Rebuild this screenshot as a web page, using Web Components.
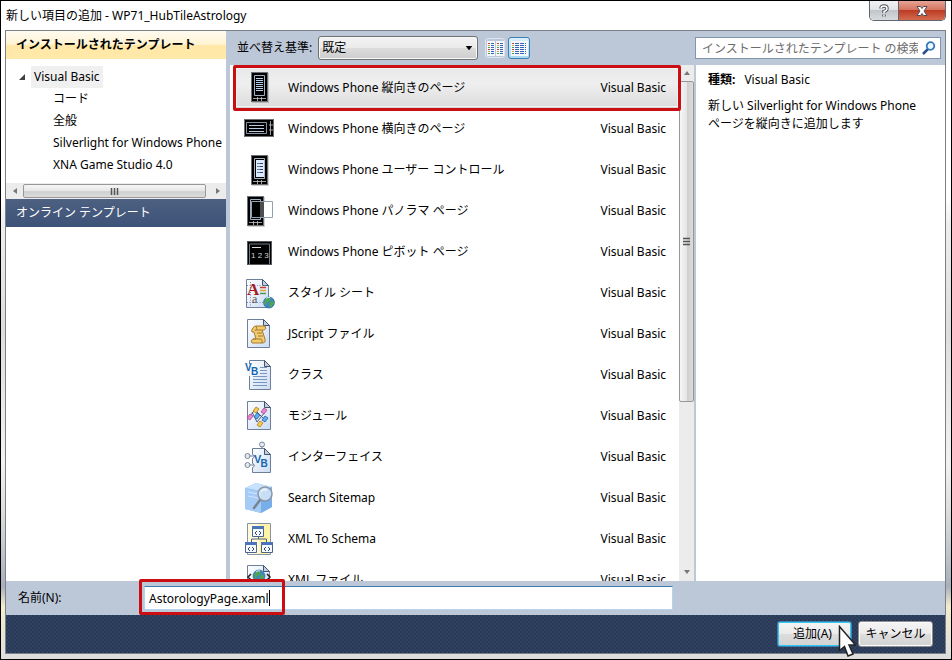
<!DOCTYPE html>
<html lang="ja">
<head>
<meta charset="utf-8">
<title>新しい項目の追加</title>
<style>
html,body{margin:0;height:100%}
body{font:12px/18px "Noto Sans","Noto Sans CJK JP",sans-serif;color:#000;background:#000}
</style>
</head>
<body>
<add-dialog></add-dialog>
<script>
function define(tag, markup, setup) {
  const template = document.createElement('template');
  template.innerHTML = '<style>*{box-sizing:border-box}:host{display:block;box-sizing:border-box}button,input,select{font:inherit;color:inherit;margin:0;padding:0;border:0;outline:0}</style>' + markup;
  customElements.define(tag, class extends HTMLElement {
    connectedCallback() {
      if (this.shadowRoot) return;
      this.attachShadow({ mode: 'open' }).append(template.content.cloneNode(true));
      if (setup) setup(this, this.shadowRoot);
    }
  });
}

/* ---- icon set ---- */
const page = (x, y, w, h) => `<path d="M${x} ${y}h${w - 6}l6 6v${h - 6}h${-w}z" fill="url(#pg)" stroke="#6e7f9c"/><path d="M${x + w - 6} ${y}v6h6z" fill="#c3cede" stroke="#44546e"/>`;
const phone = (x, y) => `<path d="M${x + 1} ${y + 1}h17v30h-17z" fill="#000" opacity=".18"/><path d="M${x} ${y}h17v30h-17z" fill="#6c6f73"/><path d="M${x + 1} ${y + 1}h15v28h-15z" fill="#000"/><path d="M${x + 3.5} ${y + 3.5}h10v20h-10z" fill="#000" stroke="#a3b2c2"/><path d="M${x + 2} ${y + 26.5}h13M${x + 6.5} ${y + 25}v4M${x + 10.5} ${y + 25}v4" stroke="#c8c8c8" stroke-width=".8"/>`;
const globe = (x, y, r) => `<circle cx="${x}" cy="${y}" r="${r}" fill="#3c86c4" stroke="#28609c" stroke-width=".6"/><path d="M${x - 4} ${y - 3}l3-2 3 1-1 3-3 1-1 3-2-2zM${x + 1} ${y}l3-2 1 3-3 4-2-2z" fill="#4fa452"/><path d="M${x - 3} ${y - 4}q2-2 4-1" stroke="#cfe9f8" fill="none"/>`;
const win = (x, y) => `<path d="M${x + .5} ${y + .5}h11v10h-11z" fill="#f4f8ff" stroke="#4a6390"/><path d="M${x} ${y}h12v3h-12z" fill="#4b74ba"/><path d="M${x + 5} ${y + 5}l-2 2 2 2M${x + 7} ${y + 5}l2 2-2 2" stroke="#334669" fill="none"/>`;
const chip = (x, y, c, s) => `<path d="M${x} ${y - 3}l3 2-3 4-3-2z" fill="${c}" stroke="${s}" stroke-width=".8"/>`;
const ICONS = {
  portrait: phone(8, 0) + '<path d="M13 6.500h7M13 8.500h7M13 10.500h7M13 12.500h7M13 14.500h7M13 16.500h7M13 18.500h7" stroke="#b9d3ef"/>',
  landscape: '<path d="M1 6h30v18H1z" fill="#6c6f73"/><path d="M2 7h28v16H2z" fill="#000"/><path d="M3.500 9.500h20v11h-20z" fill="#000" stroke="#8795a4"/><path d="M6 12.500h15M6 15.500h15M6 18.500h15" stroke="#b5cee8"/><path d="M27.500 8v14M26 12h4M26 17h4" stroke="#c8c8c8" stroke-width=".8"/>',
  control: phone(8, 1) + '<path d="M13 6h8v17h-8z" fill="#dceaff"/><path d="M14 9.500h3M14 12.500h3M14 15.500h3M14 18.500h3" stroke="#607ea8"/><path d="M17 9.500h3M17 12.500h3M17 15.500h3M17 18.500h3" stroke="#31445f"/>',
  panorama: phone(4, 1) + '<path d="M21 6h9v17h-9z" fill="#fff"/><path d="M17 7h4v15h-4z" fill="#4b4e52"/><path d="M8.500 6.500h21v16h-21z" fill="none" stroke="#93a0b3"/>',
  pivot: '<path d="M4 5h25v24H4z" fill="#55595e"/><path d="M5 6h23v22H5z" fill="#000"/><path d="M6.500 29V8h20v20" fill="none" stroke="#6f7a86"/><path d="M9 11.500h9" stroke="#ddd"/><text x="8" y="22" font-family="Liberation Sans,sans-serif" font-size="8" fill="#d3d3d3">1 2 3</text>',
  style: page(3.5, 2.5, 22, 28) + '<path d="M4 8.500h20M7.500 5v25M4 25.500h19" stroke="#7f93b5" stroke-dasharray="1 1.500"/><path d="M17 10.500h6" stroke="#cb3b32" stroke-width="1.500"/><path d="M17 13.500h6" stroke="#e5a235" stroke-width="1.500"/><path d="M17 16.500h6" stroke="#4c9850" stroke-width="1.500"/><text x="4" y="18" font-family="Liberation Serif,serif" font-weight="700" font-size="17" fill="#a51c22">A</text><text x="9" y="26" font-family="Liberation Serif,serif" font-size="12" fill="#555">a</text>' + globe(26, 25.5, 5.5),
  script: page(4.5, 1.5, 22, 28) + '<path d="M10 10q1-2 3-2h9q2 3-1 4h-2l3 9q1 4-3 4H9q-2-3 1-4h3l-2-7H9q-1-2 1-4z" fill="#f2cb70" stroke="#a77a2e"/><path d="M13 8q2 3-1 5M13 12h6M14 15h5M15 18h5M10 21h8q2 2 1 4" stroke="#a77a2e" fill="none"/>',
  vbclass: page(6.5, 1.5, 21, 29) + '<path d="M17 8.500h7M17 11.500h7M17 14.500h7M10 17.500h14M10 20.500h14M10 23.500h14M10 26.500h14" stroke="#7895bd"/><path d="M2 5h13v12H2z" fill="#f7fbff" opacity=".9"/><text x="2" y="12" font-family="Liberation Sans,sans-serif" font-weight="700" font-size="10" fill="#1664b0">V</text><text x="8" y="16" font-family="Liberation Sans,sans-serif" font-weight="700" font-size="10" fill="#1664b0">B</text>',
  module: page(4.5, 1.5, 23, 28) + '<path d="M5 18l7-8 10 10M9 12l5 10 8-10" stroke="#4b587c" fill="none"/>' + chip(13, 10, '#f4ca55', '#b37816') + chip(7, 17, '#ef84d4', '#a64b91') + chip(21, 11, '#ef84d4', '#a64b91') + chip(14, 16, '#62adf0', '#225ea3') + chip(22, 19, '#62adf0', '#225ea3') + chip(17, 24, '#f4ca55', '#b37816'),
  iface: '<path d="M19 5v5M6 15h6M6 24h6" stroke="#6c7c93"/><path d="M9.500 7.500h12l6 6v18h-18v-5q4-2 0-4v-5q4-2 0-4z" fill="url(#pg)" stroke="#6e7f9c"/><path d="M21.500 7.500v6h6z" fill="#c3cede" stroke="#44546e"/><g fill="#e5eaf0" stroke="#78889e"><circle cx="19" cy="3.500" r="2.500"/><circle cx="4.500" cy="15" r="2.500"/><circle cx="4.500" cy="24" r="2.500"/></g><text x="11" y="22" font-family="Liberation Sans,sans-serif" font-weight="700" font-size="11" fill="#1664b0">V</text><text x="17.500" y="26" font-family="Liberation Sans,sans-serif" font-weight="700" font-size="10" fill="#1664b0">B</text>',
  search: '<path d="M2 6l11-5 16 4v20l-11 6-16-4z" fill="#8bbbf1"/><path d="M2 6l11-5 16 4-11 4z" fill="#c8e1fd"/><path d="M2 6l16 3v22L2 27z" fill="#a5cbf7"/><path d="M18 9l11-4v20l-11 6z" fill="#78aeea"/><path d="M5 10l10 2M5 14l10 2" stroke="#cfe4ff"/><path d="M17 18l-6 8" stroke="#78838f" stroke-width="2.500" stroke-linecap="round"/><circle cx="22" cy="12" r="7" fill="#dbeafa" fill-opacity=".8" stroke="#8c97a5" stroke-width="1.500"/><path d="M18 10q2-3 6-2" stroke="#fff" fill="none"/>',
  schema: '<path d="M4.500.500h23v31h-23z" fill="#fff3a8" stroke="#8893a5"/><path d="M5 1h11v30H5z" fill="#fffbdc"/><path d="M15.500 12v4m-7 3v-3h15v3" stroke="#50617e" fill="none"/>' + win(9, 3) + win(2, 19) + win(18, 19),
  xml: page(4.5, 1.5, 22, 29) + globe(16, 12, 6) + '<path d="M8 10l-3 3 3 3M24 10l3 3-3 3" stroke="#222" stroke-width="1.500" fill="none"/>'
};

define('template-icon', `<style>:host{flex:none;width:32px;height:32px}svg{display:block}</style>
<svg width="32" height="32" viewBox="0 0 32 32" aria-hidden="true"></svg>`, (host, root) => {
  root.querySelector('svg').innerHTML = '<defs><linearGradient id="pg" x2="1" y2="1"><stop stop-color="#fff"/><stop offset="1" stop-color="#cbdcf3"/></linearGradient></defs>' + ICONS[host.getAttribute('name')];
});

define('title-bar', `<style>
:host{display:flex;height:29px;align-items:center;padding-left:1px}
h1{flex:1;margin:0;font-size:12px;font-weight:400}
.caps{display:flex;align-self:flex-start;height:20px;border:1px solid #61666c;border-top:0;border-radius:0 0 5px 5px;overflow:hidden}
button{display:grid;place-items:center;width:28px;background:linear-gradient(#f1f2f3,#e2e4e6 45%,#c2c6ca 50%,#d8dbdd)}
.x{width:47px;border-left:1px solid #61666c;background:linear-gradient(#e6a495,#d67461 45%,#bc3c23 50%,#d46a50)}
</style>
<h1>新しい項目の追加 - WP71_HubTileAstrology</h1>
<div class="caps">
<button aria-label="ヘルプ"><svg width="10" height="14" viewBox="0 0 10 14" fill="none"><path d="M2 4.500q0-2.500 3-2.500t3 2.500q0 2-3 3V9M5 10.500v2" stroke="#4c5057" stroke-width="3.400"/><path d="M2 4.500q0-2.500 3-2.500t3 2.500q0 2-3 3V9M5 10.500v2" stroke="#fff" stroke-width="1.500"/></svg></button>
<button class="x" aria-label="閉じる"><svg width="14" height="12" viewBox="0 0 14 12"><path d="M2 1.500h3.500L7 3.500l1.500-2H12L9 6l3 4.500H8.500L7 8.500l-1.500 2H2L5 6z" fill="#fff" stroke="#4f4b55"/></svg></button>
</div>`);

define('scroll-bar', `<style>
:host{display:flex;background:#ececec;align-items:center}
button{display:grid;place-items:center;background:none;flex:none;width:17px;height:16px}
.thumb{flex:0 1 183px;height:14px;border:1px solid #979797;border-radius:2px;background:linear-gradient(#f6f6f6,#e6e6e6 50%,#cfcfcf 55%,#dcdcdc);display:grid;place-items:center}
.rest{flex:1 0 0}
:host([vertical]){flex-direction:column;width:16px;border-right:1px solid #bcc7d8}
:host([vertical]) button{width:15px}
:host([vertical]) .thumb{flex:0 0 321px;width:15px;height:auto;background:linear-gradient(90deg,#f6f6f6,#e6e6e6 50%,#cfcfcf 55%,#dcdcdc)}
:host([vertical]) .arrow{transform:rotate(90deg)}
:host([vertical]) .grip{transform:rotate(90deg)}
</style>
<button aria-label="戻る"><svg class="arrow" width="8" height="8"><path d="M6 1v6L2 4z" fill="#777"/></svg></button>
<div class="thumb"><svg class="grip" width="9" height="7"><path d="M1.500 0v7M4.500 0v7M7.500 0v7" stroke="#555" stroke-width="1.500"/></svg></div>
<div class="rest"></div>
<button aria-label="進む"><svg class="arrow" width="8" height="8"><path d="M2 1v6l4-3z" fill="#777"/></svg></button>`);

define('template-tree', `<style>
:host{display:flex;flex-direction:column;background:#fff;min-height:0;overflow:hidden}
button{display:block;width:100%;height:28px;flex:none;text-align:left;padding-left:10px}
.installed{font-weight:700;background:linear-gradient(#fffbf0,#fff3d2 48%,#ffe8a8 50%,#ffe8a8)}
.online{color:#fff;background:linear-gradient(#4d6082,#3d5277)}
ul{list-style:none;margin:0;padding:0}
.tree{padding:7px 0 7px 13px}
li{line-height:22px;white-space:nowrap}
li li{padding-left:34px}
.row{display:flex;align-items:center;gap:6px}
.row span{background:#f0f0f0;padding:0 3px}
</style>
<button class="installed">インストールされたテンプレート</button>
<ul class="tree" role="tree"><li role="treeitem" aria-expanded="true"><div class="row"><svg width="6" height="6"><path d="M6 0v6H0z" fill="#404040"/></svg><span>Visual Basic</span></div>
<ul role="group"><li role="treeitem">コード</li><li role="treeitem">全般</li><li role="treeitem">Silverlight for Windows Phone</li><li role="treeitem">XNA Game Studio 4.0</li></ul></li></ul>
<scroll-bar></scroll-bar>
<button class="online">オンライン テンプレート</button>`);

const viewLines = (cols) => cols.map(([x, w]) => `<path d="M${x} 3.500h2M${x} 9.500h2" stroke="#c2413a"/><path d="M${x} 5.500h2M${x} 11.500h2" stroke="#c8ae3e"/><path d="M${x} 7.500h2M${x} 13.500h2" stroke="#4c995c"/><path d="M${x + 3} 3.500h${w}M${x + 3} 5.500h${w}M${x + 3} 7.500h${w}M${x + 3} 9.500h${w}M${x + 3} 11.500h${w}M${x + 3} 13.500h${w}" stroke="#3964b5" stroke-dasharray="${w > 4 ? '4 1' : 'none'}"/>`).join('');
define('sort-bar', `<style>
:host{display:flex;height:34px;align-items:center;padding-left:7px}
label{margin-right:6px}
.pick{position:relative;width:160px}
select{appearance:none;width:100%;height:24px;padding:0 20px 0 3px;border:1px solid #707070;border-radius:3px;background:linear-gradient(#f3f3f3,#ebebeb 49%,#ddd 51%,#cdcdcd);box-shadow:inset 0 0 0 1px #f8f8f8}
.pick svg{position:absolute;right:5px;top:10px;pointer-events:none}
button{display:grid;place-items:center;width:20px;height:20px;margin-left:7px;border:1px solid #dfe5ee;border-radius:3px;background:none}
.on{width:22px;height:22px;margin-left:3px;border-color:#3c7fb1;background:linear-gradient(#dcf0fb,#a9d9f2)}
svg{display:block}
</style>
<label for="sort">並べ替え基準:</label>
<div class="pick"><select id="sort"><option>既定</option></select><svg width="8" height="5"><path d="M1 0h6L4 4z" stroke="#000" stroke-width=".5"/></svg></div>
<button aria-label="小さいアイコン"><svg width="17" height="17" viewBox="0 0 17 17"><path d="M0 1h8v15H0zM9 1h8v15H9z" fill="#f4f8fd"/>${viewLines([[1, 3], [10, 3]])}</svg></button>
<button class="on" aria-label="中アイコン" aria-pressed="true"><svg width="17" height="17" viewBox="0 0 17 17"><path d="M0 1h17v15H0z" fill="#f4f8fd"/>${viewLines([[1, 11]])}</svg></button>`);

define('template-item', `<style>
:host{display:flex;position:relative;height:41px;align-items:center;gap:13px;padding:0 12px 0 7px;border:1px solid transparent}
:host([aria-selected]){background:linear-gradient(#e9e9e9,#efefef 40%,#dcdcdc);border-color:#d4d4d4;box-shadow:inset 0 0 0 1px #f2f2f2}
.name{flex:1}
.mark{position:absolute;inset:-3px -3px -4px -3px;border:3px solid #cb0e12;border-radius:2px;z-index:2}
:host(:not([aria-selected])) .mark{display:none}
</style>
<slot name="icon"></slot><span class="name"><slot></slot></span><span>Visual Basic</span><div class="mark"></div>`);

const ITEMS = [['portrait', 'Windows Phone 縦向きのページ'], ['landscape', 'Windows Phone 横向きのページ'], ['control', 'Windows Phone ユーザー コントロール'], ['panorama', 'Windows Phone パノラマ ページ'], ['pivot', 'Windows Phone ピボット ページ'], ['style', 'スタイル シート'], ['script', 'JScript ファイル'], ['vbclass', 'クラス'], ['module', 'モジュール'], ['iface', 'インターフェイス'], ['search', 'Search Sitemap'], ['schema', 'XML To Schema'], ['xml', 'XML ファイル']];
define('template-list', `<style>
:host{display:flex;flex:1;min-height:0;overflow:hidden;background:#fff}
.items{flex:1;padding:2px 0 0 5px}
scroll-bar{padding-bottom:1px}
</style>
<div class="items" role="listbox" aria-label="テンプレート">${ITEMS.map(([i, t], n) => `<template-item role="option"${n ? '' : ' aria-selected="true"'}><template-icon slot="icon" name="${i}"></template-icon>${t}</template-item>`).join('')}</div>
<scroll-bar vertical></scroll-bar>`);

define('search-box', `<style>
:host{display:flex;align-items:center;height:34px;padding-right:4px}
form{display:flex;flex:1;align-items:center;height:22px;border:1px solid #8394ad;background:#fff;padding:0 4px 0 6px}
input{flex:1;min-width:0;height:20px;background:none}
input::placeholder{color:#6d6d6d;opacity:1}
button{display:grid;place-items:center;width:14px;height:16px;margin-left:4px;background:none}
</style>
<form role="search"><input type="text" aria-label="検索" placeholder="インストールされたテンプレート の検索"><button type="button" aria-label="検索する"><svg width="14" height="14" viewBox="0 0 14 14"><path d="M6 8l-5 5" stroke="#27518f" stroke-width="2.500"/><circle cx="8.500" cy="5" r="3.800" fill="#eef8ff" stroke="#3478bd" stroke-width="1.800"/></svg></button></form>`);

define('details-pane', `<style>
:host{display:flex;flex-direction:column;min-height:0}
.text{flex:1;background:#fff;padding:6px 12px 0;margin-left:1px}
p{margin:0 0 8px}
b{margin-right:9px}
</style>
<search-box></search-box>
<div class="text"><p><b>種類:</b>Visual Basic</p><p>新しい Silverlight for Windows Phone<br>ページを縦向きに追加します</p></div>`);

define('name-bar', `<style>
:host{display:flex;height:34px;align-items:center;background:#bcc7d8;padding-left:12px}
label{width:126px}
.field{position:relative;flex:0 1 529px;display:flex;align-items:center;height:24px;background:#fff;border:1px solid #b5d3ea;border-top-color:#3d7bad;padding-left:4px}
input{field-sizing:content;height:20px;background:none}
.caret{width:1px;height:16px;background:#000}
.mark{position:absolute;left:-6px;top:-8px;width:146px;height:36px;border:3px solid #cb0e12;border-radius:2px}
</style>
<label for="name">名前(N):</label>
<div class="field"><input id="name" value="AstorologyPage.xaml"><span class="caret"></span><div class="mark"></div></div>`);

define('action-bar', `<style>
:host{display:flex;position:relative;height:38px;align-items:center;justify-content:flex-end;gap:6px;padding:0 12px 0 0;background:radial-gradient(circle at 1px 1px,#31436300 0,#314363 0,#314363 1px,transparent 1px) 0 0/4px 4px,radial-gradient(circle at 3px 3px,#304262 0,#304262 1px,transparent 1px) 0 0/4px 4px,#293955}
button{width:75px;height:26px;border:1px solid #8e8f8f;border-radius:3px;background:linear-gradient(#f4f4f4,#ebebeb 49%,#ddd 51%,#d2d2d2);box-shadow:inset 0 0 0 1px #fafafa}
.ok{border-color:#3c7fb1;box-shadow:inset 0 0 0 1px #35c8ee;padding-right:4px}
svg{position:absolute;right:89px;top:10px}
</style>
<button class="ok">追加(A)</button><button>キャンセル</button>
<svg width="18" height="34" viewBox="0 0 18 34" aria-hidden="true"><path d="M1.500 1.500v24l5-4 3.500 9.500 5-2-4-9h6.500z" fill="#fff" stroke="#222" stroke-width="1.500"/></svg>`);

define('add-dialog', `<style>
:host{display:flex;flex-direction:column;height:100vh;padding:1px;background:#000}
.chrome{flex:1;min-height:0;display:flex;flex-direction:column;padding:0 5px 5px 4px;background:linear-gradient(#fff 30%,#eee 34%,#ddd 50%,#f2f2f2 70%,#dcdcdc 78%,#a8b0bd 89%,#f5ecce 92%,#ddd)}
.client{flex:1;min-height:0;display:flex;flex-direction:column;border:1px solid #7b7f86;background:#bcc7d8}
.panes{flex:1;min-height:0;display:grid;grid-template-columns:220px minmax(0,1fr) 250px;grid-template-rows:minmax(0,1fr)}
.center{display:flex;flex-direction:column;min-height:0;padding-left:4px}
</style>
<div class="chrome"><title-bar></title-bar>
<main class="client"><div class="panes"><template-tree></template-tree><div class="center"><sort-bar></sort-bar><template-list></template-list></div><details-pane></details-pane></div>
<name-bar></name-bar><action-bar></action-bar></main></div>`);
</script>
</body>
</html>
